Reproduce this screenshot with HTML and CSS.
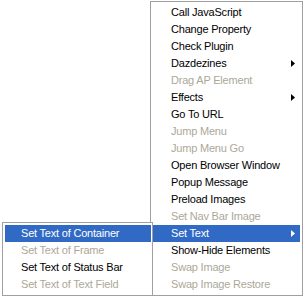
FILE: index.html
```html
<!DOCTYPE html>
<html lang="en">
<head>
    <meta charset="UTF-8">
    <title>Behaviors menu</title>
    <link rel="stylesheet" href="styles.css">
</head>
<body>
<div class="menu main">
    <div class="item">Call JavaScript</div>
    <div class="item">Change Property</div>
    <div class="item">Check Plugin</div>
    <div class="item">Dazdezines<svg class="arrow" width="4" height="7"><path d="M0 0L4 3.5L0 7Z"/></svg></div>
    <div class="item off">Drag AP Element</div>
    <div class="item">Effects<svg class="arrow" width="4" height="7"><path d="M0 0L4 3.5L0 7Z"/></svg></div>
    <div class="item">Go To URL</div>
    <div class="item off">Jump Menu</div>
    <div class="item off">Jump Menu Go</div>
    <div class="item">Open Browser Window</div>
    <div class="item">Popup Message</div>
    <div class="item">Preload Images</div>
    <div class="item off">Set Nav Bar Image</div>
    <div class="item on">Set Text<svg class="arrow" width="4" height="7"><path d="M0 0L4 3.5L0 7Z"/></svg></div>
    <div class="item">Show-Hide Elements</div>
    <div class="item off">Swap Image</div>
    <div class="item off">Swap Image Restore</div>
</div>

<!-- flyout for Set Text -->
<div class="menu submenu">
    <div class="item on">Set Text of Container</div>
    <div class="item off">Set Text of Frame</div>
    <div class="item">Set Text of Status Bar</div>
    <div class="item off">Set Text of Text Field</div>
</div>
</body>
</html>
```

FILE: styles.css
```css
body {
    margin: 0;
    height: 297px;
    overflow: hidden;
    position: relative;
    background-color: #ffffff;
    font-family: "Liberation Sans", Arial, sans-serif;
    font-size: 11px;
    letter-spacing: -0.2px;
    color: #000000;
}
.menu {
    background-color: #ffffff;
    border: 1px solid #a0a0a0;
}
.main {
    width: 147px;
    margin: 1px 0 0 150px;
    padding: 2px;
}
.submenu {
    position: absolute;
    left: 2px;
    top: 222px;
    width: 146px;
    padding: 2px 1px 2px 2px;
}
.item {
    position: relative;
    height: 17px;
    line-height: 17px;
    padding-left: 18px;
    white-space: nowrap;
}
.submenu .item {
    padding-left: 16px;
}
.item.off {
    color: #aca899;
}
.item.on {
    background-color: #316ac5;
    color: #ffffff;
}
.arrow {
    position: absolute;
    right: 5px;
    top: 5px;
    fill: currentColor;
}
```
